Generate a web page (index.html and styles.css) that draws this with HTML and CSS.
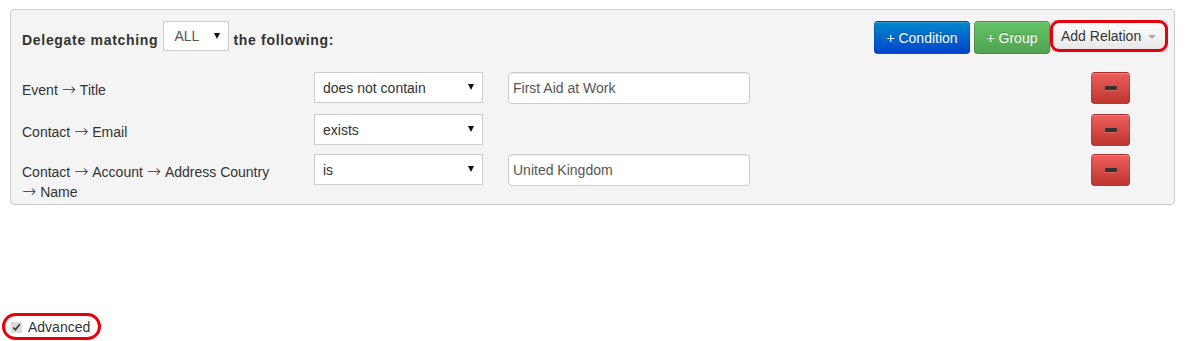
FILE: index.html
```html
<!DOCTYPE html>
<html lang="en">
<head>
  <meta charset="UTF-8" />
  <title>Delegate Rules</title>
  <link rel="stylesheet" href="styles.css">
</head>
<body>
  <div class="query-panel">
    <div class="query-header">
      <div class="matching">
        <span class="strong">Delegate matching</span>
        <span class="select-wrap select-small">
          <select class="field-select"><option>ALL</option></select>
        </span>
        <span class="strong">the following:</span>
      </div>
      <div class="actions">
        <button class="btn btn-primary">+ Condition</button>
        <button class="btn btn-success">+ Group</button>
        <button class="btn btn-default btn-marked">Add Relation <span class="caret"></span></button>
      </div>
    </div>

    <div class="rule rule-first">
      <div class="rule-label">Event <span class="arrow">&rarr;</span>&nbsp;Title</div>
      <span class="select-wrap"><select class="field-select"><option>does not contain</option></select></span>
      <input class="field-input" type="text" value="First Aid at Work">
      <button class="btn btn-danger"><span class="icon-minus"></span></button>
    </div>

    <div class="rule">
      <div class="rule-label">Contact <span class="arrow">&rarr;</span>&nbsp;Email</div>
      <span class="select-wrap"><select class="field-select"><option>exists</option></select></span>
      <button class="btn btn-danger"><span class="icon-minus"></span></button>
    </div>

    <div class="rule rule-last">
      <div class="rule-label">Contact <span class="arrow">&rarr;</span>&nbsp;Account <span class="arrow">&rarr;</span>&nbsp;Address Country <span class="arrow">&rarr;</span>&nbsp;Name</div>
      <span class="select-wrap"><select class="field-select"><option>is</option></select></span>
      <input class="field-input" type="text" value="United Kingdom">
      <button class="btn btn-danger"><span class="icon-minus"></span></button>
    </div>
  </div>

  <label class="advanced">
    <input type="checkbox" checked> Advanced
  </label>
</body>
</html>
```

FILE: styles.css
```css
body {
  margin: 0;
  padding: 9px 10px;
  font-family: "Liberation Sans", Arial, sans-serif;
  font-size: 14px;
  line-height: 20px;
  color: #333;
  background: #fff;
}

.query-panel {
  background: #f4f4f4;
  border: 1px solid #ccc;
  border-radius: 4px;
  padding: 11px 6px 2px 11px;
}

.query-header {
  display: flex;
  justify-content: space-between;
  align-items: flex-start;
  margin-bottom: 18px;
}

.matching {
  display: flex;
  align-items: center;
  height: 30px;
  padding-top: 8px;
  box-sizing: border-box;
}

.strong {
  font-weight: bold;
  letter-spacing: 0.7px;
}

.arrow {
  font-family: "DejaVu Sans", sans-serif;
  font-weight: 200;
  font-size: 17px;
  line-height: 1;
}

.select-wrap {
  position: relative;
  display: inline-block;
}

.select-wrap::after {
  content: "";
  position: absolute;
  right: 9px;
  top: 12px;
  border-left: 3px solid transparent;
  border-right: 3px solid transparent;
  border-top: 6px solid #111;
  pointer-events: none;
}

.field-select {
  -webkit-appearance: none;
  appearance: none;
  width: 169px;
  height: 31px;
  margin: 0;
  padding: 0 8px;
  border: 1px solid #ccc;
  border-radius: 0;
  background: #fff;
  font: inherit;
  color: #333;
}

.select-small {
  margin: 0 4px 0 5px;
  top: -4px;
}

.select-small .field-select {
  width: 66px;
  height: 30px;
  padding: 0 10px;
  color: #555;
}

.actions {
  display: flex;
}

.btn {
  font: inherit;
  height: 33px;
  padding: 0;
  white-space: nowrap;
  border: 1px solid rgba(0, 0, 0, 0.15);
  border-bottom-color: rgba(0, 0, 0, 0.3);
  border-radius: 4px;
  color: #fff;
  text-shadow: 0 -1px 0 rgba(0, 0, 0, 0.25);
  box-shadow: inset 0 1px 0 rgba(255, 255, 255, 0.2);
  cursor: pointer;
}

.btn-primary {
  width: 96px;
  background: linear-gradient(#0088cc, #0044cc);
  margin-right: 4px;
}

.btn-success {
  width: 76px;
  background: linear-gradient(#62c462, #51a351);
}

.btn-default {
  position: relative;
  width: 118px;
  height: 32px;
  margin-top: -1px;
  padding: 0 10px;
  color: #333;
  text-shadow: 0 1px 1px rgba(255, 255, 255, 0.75);
  background: linear-gradient(#ffffff, #e6e6e6);
  border-color: #ccc;
  text-align: left;
}

.caret {
  display: inline-block;
  margin-left: 3px;
  vertical-align: middle;
  border-left: 4px solid transparent;
  border-right: 4px solid transparent;
  border-top: 4px solid #aaa;
}

/* red annotation rings */
.btn-marked::after,
.advanced::after {
  content: "";
  position: absolute;
  border: 3px solid #e8000a;
  pointer-events: none;
}

.btn-marked::after {
  top: -1px;
  left: -1px;
  right: -1px;
  bottom: -1px;
  border-radius: 9px;
}

.rule {
  display: flex;
  align-items: flex-start;
  margin-bottom: 8px;
  padding-right: 38px;
}

.rule-first {
  margin-bottom: 10px;
}

.rule-last {
  margin-bottom: 0;
}

.rule-label {
  width: 262px;
  margin-right: 30px;
  padding-top: 8px;
}

.field-input {
  width: 242px;
  height: 32px;
  box-sizing: border-box;
  margin: 0 0 0 25px;
  padding: 0 4px;
  border: 1px solid #ccc;
  border-radius: 4px;
  font: inherit;
  color: #555;
  background: #fff;
  box-shadow: inset 0 1px 1px rgba(0, 0, 0, 0.075);
}

.btn-danger {
  width: 39px;
  height: 32px;
  margin-left: auto;
  background: linear-gradient(#ee5f5b, #bd362f);
  display: flex;
  align-items: center;
  justify-content: center;
}

.icon-minus {
  display: block;
  width: 12px;
  height: 4px;
  border-radius: 1px;
  background: #333;
  box-shadow: 0 1px 0 rgba(255, 255, 255, 0.2);
}

.advanced {
  position: relative;
  display: inline-flex;
  align-items: center;
  margin-top: 112px;
  color: #333;
}

.advanced input {
  margin: 0 6px 0 1px;
  width: 11px;
  height: 11px;
  accent-color: #dcdcdc;
}

.advanced::after {
  top: -4px;
  left: -8px;
  right: -11px;
  bottom: -3px;
  border-radius: 14px;
}
```
